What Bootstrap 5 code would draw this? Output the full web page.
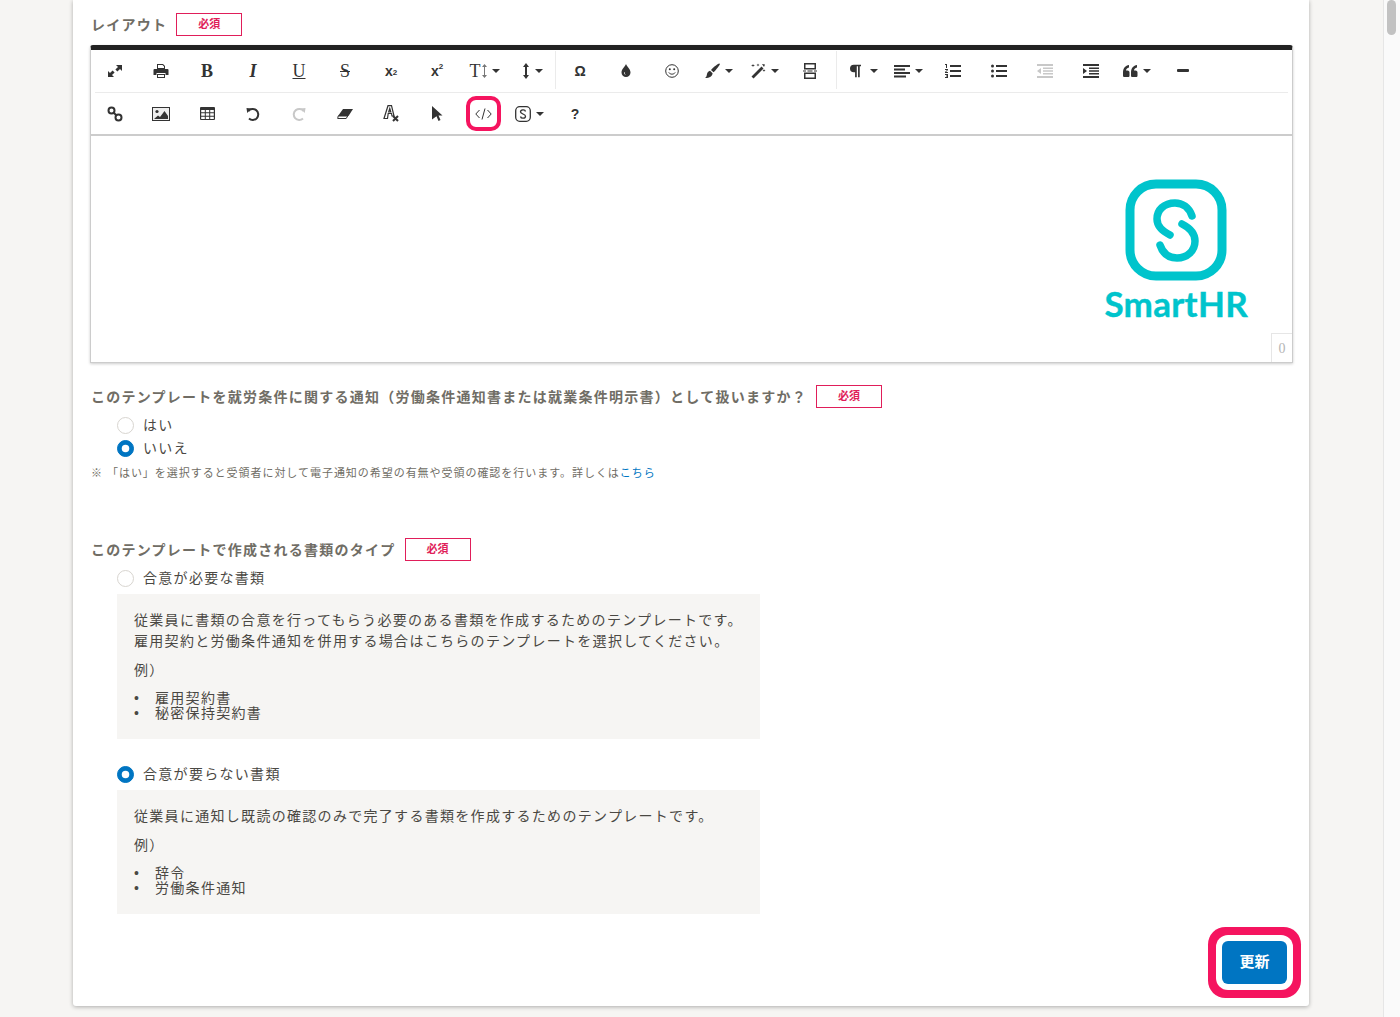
<!DOCTYPE html>
<html lang="ja">
  <head>
    <meta charset="UTF-8" />
    <meta name="viewport" content="width=device-width, initial-scale=1.0" />
    <title>テンプレート編集</title>
    <link
      rel="stylesheet"
      href="https://cdn.jsdelivr.net/npm/bootstrap@5.3.0/dist/css/bootstrap.min.css"
    />
    <style>
      html,
      body {
        height: 1017px;
        overflow: hidden;
      }
      body {
        background-color: #f6f5f3;
        color: #4a4843;
        font-family: "Liberation Sans", "Noto Sans CJK JP", sans-serif;
        font-size: 14px;
      }
      .page-main {
        width: 1383px;
        padding-left: 73px;
      }
      .fake-scroll {
        width: 17px;
        height: 1017px;
        background-color: #fafafa;
        border-left: 1px solid #e6e6e6;
        padding-left: 3px;
      }
      .fake-thumb {
        width: 9px;
        height: 35px;
        background-color: #c2c2c2;
        border-radius: 5px;
      }
      .sheet {
        width: 1236px;
        height: 1006px;
        background-color: #fff;
        padding: 13px 16px 22px 17px;
        box-shadow: 0 1px 4px rgba(0, 0, 0, 0.3);
        border-radius: 0 0 3px 3px;
      }
      .field-label {
        color: #706d65;
        font-weight: 700;
        font-size: 14px;
        letter-spacing: 1.25px;
        height: 23px;
        line-height: 25px;
        padding-left: 1px;
      }
      .req-tag {
        width: 66px;
        height: 23px;
        border: 1px solid #e01e5a;
        color: #e01e5a;
        font-size: 11px;
        font-weight: 700;
        line-height: 21px;
        text-align: center;
        margin-left: 9px;
        letter-spacing: 0;
      }
      .editor-box {
        margin-top: 9px;
        border: 1px solid #ccc;
        border-top: 5px solid #222;
        border-radius: 3px 3px 0 0;
        box-shadow: 0 1px 3px rgba(0, 0, 0, 0.2);
        position: relative;
      }
      .tool-row {
        height: 41px;
        padding-left: 1px;
      }
      .tool-row-top {
        height: 42px;
      }
      .tool-divider {
        height: 1px;
        margin: 0 4px;
        background-color: #ebebeb;
      }
      .tool-btn {
        width: 46px;
        height: 41px;
        padding: 0;
        border: 0;
        border-radius: 0;
        color: #333;
        flex: none;
        gap: 5px;
      }
      .tool-btn svg {
        fill: currentColor;
        display: block;
      }
      .tool-btn.is-off {
        color: #c8c8c8;
      }
      .tool-btn .dropdown-toggle::after {
        margin-left: 0;
        vertical-align: middle;
        border-top-width: 4px;
        border-left-width: 4.5px;
        border-right-width: 4.5px;
        display: block;
      }
      .tool-serif {
        font-family: "Liberation Serif", serif;
        font-size: 18px;
        line-height: 1;
      }
      .tool-sans {
        font-family: "Liberation Sans", sans-serif;
        font-weight: 700;
        font-size: 14px;
        line-height: 1;
      }
      .tool-sans sub,
      .tool-sans sup {
        font-size: 8px;
      }
      .tool-line {
        padding: 0 2px;
      }
      .tool-sep {
        width: 1px;
        height: 38px;
        background-color: #ebebeb;
        margin: 1px 1px 0 0;
      }
      .sep-b {
        margin-left: 3px;
        margin-right: 4px;
      }
      .w-t {
        width: 49px;
        gap: 1px;
      }
      .w-align {
        width: 43px;
      }
      .code-ring {
        width: 35px;
        height: 35px;
        border: 4px solid #f5145f;
        border-radius: 10px;
      }
      .editor-body {
        height: 228px;
        border-top: 2px solid #ccc;
        padding: 43px 44px 0 0;
      }
      .logo-text {
        font-family: Lato, sans-serif;
        font-weight: 700;
        font-size: 35px;
        line-height: 36px;
        letter-spacing: 0.3px;
        margin-top: 4px;
        color: #00c4cc;
        -webkit-text-stroke: 0.4px #00c4cc;
      }
      .char-count {
        position: absolute;
        right: 0;
        bottom: 0;
        width: 21px;
        height: 29px;
        border: 1px solid #e6e6e6;
        border-width: 1px 0 0 1px;
        color: #b5b5b5;
        font-family: "Liberation Serif", serif;
        font-size: 14px;
        line-height: 29px;
        text-align: center;
      }
      .q-one {
        margin-top: 22px;
      }
      .q-two {
        margin-top: 57px;
      }
      .opt-list {
        padding-left: 27px;
        margin-top: 6px;
      }
      .opt-row {
        height: 23px;
        min-height: 0;
        margin: 0;
        padding: 0;
        gap: 9px;
      }
      .opt-row .form-check-input {
        width: 17px;
        height: 17px;
        margin: 0;
        float: none;
        border-color: #d8d5d0;
      }
      .opt-row .form-check-input:checked {
        background-color: #0075c2;
        border-color: #0075c2;
      }
      .opt-row .form-check-label {
        letter-spacing: 1.3px;
        line-height: 23px;
      }
      .note-text {
        color: #706d65;
        font-size: 11px;
        letter-spacing: 0.96px;
        line-height: 16px;
        margin-top: 5px;
        padding-left: 1px;
      }
      .note-text a {
        color: #0075c2;
        text-decoration: none;
      }
      .desc-box {
        width: 643px;
        background-color: #f6f5f3;
        padding: 16px 17px 18px;
        margin-top: 4px;
        letter-spacing: 1.3px;
        line-height: 21px;
      }
      .desc-box p {
        margin: 0 0 8px;
      }
      .desc-box ul {
        list-style: none;
        margin: 10px 0 0;
        padding-left: 21px;
        line-height: 15px;
      }
      .desc-box li::before {
        content: "•";
        display: inline-block;
        width: 21px;
        margin-left: -21px;
      }
      .opt-after {
        margin-top: 24px;
      }
      .save-row {
        margin-top: 27px;
        padding-right: 6px;
      }
      .save-btn {
        width: 65px;
        height: 43px;
        padding: 0;
        background-color: #0075c2;
        border: 0;
        border-radius: 6px;
        color: #fff;
        font-weight: 700;
        font-size: 15px;
        box-shadow: 0 0 0 6px #fff, 0 0 0 14px #f5145f;
      }
    </style>
  </head>
  <body>
    <div class="d-flex">
      <div class="page-main">
        <div class="sheet">
          <div class="d-flex field-label">
            <span>レイアウト</span><span class="req-tag">必須</span>
          </div>

          <div class="editor-box">
            <!-- toolbar row 1 -->
            <div class="d-flex tool-row tool-row-top">
              <button class="btn tool-btn d-flex align-items-center justify-content-center"><svg width="16" height="16" viewBox="0 0 16 16"><path d="M9 2h6v6l-2-2-2.600 2.600-2-2L11 4zM1 14V8l2 2 2.600-2.600 2 2L5 12l2 2z"/></svg></button>
              <button class="btn tool-btn d-flex align-items-center justify-content-center"><svg width="16" height="16" viewBox="0 0 16 16"><path d="M4 1h6l2 2v3H4zM5 2v3h6V3.500L9.500 2zM1.500 6h13a1 1 0 0 1 1 1v5h-3v-2h-9v2H.5V7a1 1 0 0 1 1-1zM4 11h8v4H4zm1 1v2h6v-2z" fill-rule="evenodd"/></svg></button>
              <button class="btn tool-btn d-flex align-items-center justify-content-center tool-serif fw-bold">B</button>
              <button class="btn tool-btn d-flex align-items-center justify-content-center tool-serif fw-bold fst-italic">I</button>
              <button class="btn tool-btn d-flex align-items-center justify-content-center tool-serif"><span class="tool-line text-decoration-underline">U</span></button>
              <button class="btn tool-btn d-flex align-items-center justify-content-center tool-serif"><span class="tool-line text-decoration-line-through">S</span></button>
              <button class="btn tool-btn gap-0 d-flex align-items-center justify-content-center tool-sans">x<sub>2</sub></button>
              <button class="btn tool-btn gap-0 d-flex align-items-center justify-content-center tool-sans">x<sup>2</sup></button>
              <button class="btn tool-btn w-t d-flex align-items-center justify-content-center"><span class="tool-serif">T</span><svg width="5" height="14" viewBox="0 0 5 14"><path d="M2.500 0 5 3H3v8h2l-2.500 3L0 11h2V3H0z" fill="#777"/></svg><span class="dropdown-toggle ms-1"></span></button>
              <button class="btn tool-btn d-flex align-items-center justify-content-center"><svg width="8" height="16" viewBox="0 0 8 16"><path d="M4 0l3 4H5v8h2l-3 4-3-4h2V4H1z"/></svg><span class="dropdown-toggle"></span></button>
              <div class="tool-sep"></div>
              <button class="btn tool-btn d-flex align-items-center justify-content-center tool-sans">Ω</button>
              <button class="btn tool-btn d-flex align-items-center justify-content-center"><svg width="12" height="14" viewBox="0 0 12 14"><path d="M6 0c1 3 4.500 5 4.500 8.500a4.500 4.500 0 0 1-9 0C1.500 5 5 3 6 0zM4 8.500c0 1.500 1 2.500 2 2.500-1-.7-1.300-1.500-1.300-3z" fill-rule="evenodd"/></svg></button>
              <button class="btn tool-btn d-flex align-items-center justify-content-center"><svg width="14" height="14" viewBox="0 0 14 14"><circle cx="7" cy="7" r="6.300" fill="none" stroke="currentColor"/><circle cx="4.800" cy="5.200" r="1"/><circle cx="9.200" cy="5.200" r="1"/><path d="M3.800 8.500c1.500 2.200 4.900 2.200 6.400 0" fill="none" stroke="currentColor"/></svg></button>
              <button class="btn tool-btn d-flex align-items-center justify-content-center"><svg width="16" height="16" viewBox="0 0 16 16"><path d="M15 .5c.6 0 1 .5.8 1C14.500 4 11 8 9.500 9.300L7 7C8.500 5.200 13 1.200 15 .5zM6 7.800l2.600 2.400C8.300 13 6 15 1 15c1.500-1 1.600-2 1.900-3.500C3.200 9.500 4.500 8.200 6 7.800z"/></svg><span class="dropdown-toggle"></span></button>
              <button class="btn tool-btn d-flex align-items-center justify-content-center"><svg width="16" height="16" viewBox="0 0 16 16"><path d="M11.500 3.500l2 2L3.500 15.500l-2-2zM3 1l.5 1L5 2.500l-1.500.5L3 4l-.5-1L1 2.500l1.500-.5zM8 .5l.4 1 1.100.5-1.100.4L8 3.500l-.4-1.100L6.500 2l1.100-.5zM14 6l.4 1 1.100.5-1.100.4L14 9l-.4-1.100-1.100-.4 1.100-.5zM12 1l3 .5-1 2.500z"/></svg><span class="dropdown-toggle"></span></button>
              <button class="btn tool-btn d-flex align-items-center justify-content-center"><svg width="14" height="16" viewBox="0 0 14 16"><path d="M1 0h12v6.500H1zM2.500 1.500v3.500h9V1.500zM1 9.500h12V16H1zm1.500 1.500v3.500h9V11zM0 7.500h3v1H0zm4.500 0h5v1h-5zm6.500 0h3v1h-3z" fill-rule="evenodd"/></svg></button>
              <div class="tool-sep sep-b"></div>
              <button class="btn tool-btn d-flex align-items-center justify-content-center"><svg width="11" height="14" viewBox="0 0 13 15"><path d="M4.500 0H13v2h-1.500v13h-2V2H8v13H6V9h-1.500a4.500 4.500 0 0 1 0-9z"/></svg><span class="dropdown-toggle ms-1"></span></button>
              <button class="btn tool-btn w-align d-flex align-items-center justify-content-center"><svg width="16" height="14" viewBox="0 0 16 14"><path d="M0 1h16v2H0zM0 4.500h11v2H0zM0 8h16v2H0zM0 11.500h12v2H0z"/></svg><span class="dropdown-toggle"></span></button>
              <button class="btn tool-btn d-flex align-items-center justify-content-center"><svg width="16" height="14" viewBox="0 0 16 14"><path d="M5 1h11v2H5zM5 6h11v2H5zM5 11h11v2H5zM0 0h2v4H1V1H0zM0 5h3v1L1 8h2v1H0V8l2-2H0zM0 10h3v4H0v-1h2v-.5H1v-1h1V11H0z"/></svg></button>
              <button class="btn tool-btn d-flex align-items-center justify-content-center"><svg width="16" height="14" viewBox="0 0 16 14"><circle cx="1.500" cy="2" r="1.500"/><circle cx="1.500" cy="7" r="1.500"/><circle cx="1.500" cy="12" r="1.500"/><path d="M5 1h11v2H5zM5 6h11v2H5zM5 11h11v2H5z"/></svg></button>
              <button class="btn tool-btn is-off d-flex align-items-center justify-content-center"><svg width="16" height="14" viewBox="0 0 16 14"><path d="M0 0h16v2H0zM6 3.500h10v1.500H6zM6 6.300h10v1.500H6zM6 9h10v1.500H6zM0 12h16v2H0zM4 4v6L0 7z"/></svg></button>
              <button class="btn tool-btn d-flex align-items-center justify-content-center"><svg width="16" height="14" viewBox="0 0 16 14"><path d="M0 0h16v2H0zM6 3.500h10v1.500H6zM6 6.300h10v1.500H6zM6 9h10v1.500H6zM0 12h16v2H0zM0 4v6l4-3z"/></svg></button>
              <button class="btn tool-btn d-flex align-items-center justify-content-center"><svg width="15" height="12" viewBox="0 0 15 12"><path d="M0 7.500C0 3 2.500.5 6 0v2.500C4 3 3 4 3 5.500h1.500C6 5.500 6.500 6.500 6.500 7.500V10.500C6.500 11.500 6 12 5 12H1.500C.5 12 0 11.500 0 10.500zM8 7.500C8 3 10.500.5 14 0v2.500C12 3 11 4 11 5.500h1.500c1.500 0 2 1 2 2v3c0 1-.5 1.500-1.500 1.500H9.500C8.500 12 8 11.500 8 10.500z"/></svg><span class="dropdown-toggle"></span></button>
              <button class="btn tool-btn d-flex align-items-center justify-content-center"><svg width="12" height="4" viewBox="0 0 12 4"><rect width="12" height="3" rx="1"/></svg></button>
            </div>
            <div class="tool-divider"></div>

            <!-- toolbar row 2 -->
            <div class="d-flex tool-row">
              <button class="btn tool-btn d-flex align-items-center justify-content-center"><svg width="16" height="16" viewBox="0 0 16 16"><g fill="none" stroke="currentColor" stroke-width="2"><circle cx="4.500" cy="4.500" r="3"/><circle cx="11.500" cy="11.500" r="3"/><path d="M6.500 6.500l3 3"/></g></svg></button>
              <button class="btn tool-btn d-flex align-items-center justify-content-center"><svg width="18" height="14" viewBox="0 0 18 14"><rect x=".5" y=".5" width="17" height="13" fill="#eee" stroke="currentColor"/><circle cx="5" cy="4.500" r="1.600"/><path d="M2 12l4-3.500 2 1.500 4.500-6 3.500 5v3z"/></svg></button>
              <button class="btn tool-btn d-flex align-items-center justify-content-center"><svg width="15" height="13" viewBox="0 0 15 13"><path d="M1 0h13a1 1 0 0 1 1 1v11a1 1 0 0 1-1 1H1a1 1 0 0 1-1-1V1a1 1 0 0 1 1-1zm.200 3v2.300h3.600V3zm4.600 0v2.300h3.400V3zm4.400 0v2.300h3.600V3zm-9 3.300v2.400h3.600V6.300zm4.600 0v2.400h3.400V6.300zm4.400 0v2.400h3.600V6.300zm-9 3.400v2.200h3.600V9.700zm4.600 0v2.200h3.400V9.700zm4.400 0v2.200h3.600V9.700z" fill-rule="evenodd"/></svg></button>
              <button class="btn tool-btn d-flex align-items-center justify-content-center"><svg width="14" height="14" viewBox="0 0 14 14"><path d="M2.300 4.200A5.500 5.500 0 1 1 3 11.500" fill="none" stroke="currentColor" stroke-width="2"/><path d="M.5 1 5.500 1.500 1.200 6z"/></svg></button>
              <button class="btn tool-btn is-off d-flex align-items-center justify-content-center"><svg width="14" height="14" viewBox="0 0 14 14"><path d="M11.700 4.200A5.500 5.500 0 1 0 11 11.500" fill="none" stroke="currentColor" stroke-width="2"/><path d="M13.500 1 8.500 1.500l4.300 4.500z"/></svg></button>
              <button class="btn tool-btn d-flex align-items-center justify-content-center"><svg width="16" height="10" viewBox="0 0 16 10"><path d="M6 0h10l-4.500 7H1z"/><path d="M1.200 7h9.500L9.200 9.500H.7z" fill="#fff" stroke="currentColor"/></svg></button>
              <button class="btn tool-btn d-flex align-items-center justify-content-center"><svg width="17" height="17" viewBox="0 0 17 17"><path d="M5 .7h3.500L11 11H9l-.5-2.500H5.200L4.500 13.500H1zM6.800 3.500 5.700 7h2.100z" fill="#fff" stroke="currentColor" stroke-width="1.200" fill-rule="evenodd"/><path d="M10 11l5 5M15 11l-5 5" fill="none" stroke="currentColor" stroke-width="2"/></svg></button>
              <button class="btn tool-btn d-flex align-items-center justify-content-center"><svg width="12" height="15" viewBox="0 0 12 15"><path d="M1 0l10.500 9.500H7.500l2 4.500-2 1-2-4.700L1 13.500z"/></svg></button>
              <button class="btn tool-btn d-flex align-items-center justify-content-center">
                <span class="code-ring d-flex align-items-center justify-content-center"><svg width="17" height="12" viewBox="0 0 17 12"><path d="M4.500 2 .8 6l3.700 4M12.500 2l3.700 4-3.700 4M10 .5 7 11.500" fill="none" stroke="currentColor"/></svg></span>
              </button>
              <button class="btn tool-btn d-flex align-items-center justify-content-center"><svg width="16" height="16" viewBox="0 0 16 16"><rect x=".7" y=".7" width="14.600" height="14.600" rx="4" fill="none" stroke="currentColor" stroke-width="1.300"/><path d="M10.500 5.500C10 3 5.500 3.500 5.500 6c0 2 5 2 5 4.200 0 2.500-4.500 2.700-5 .3" fill="none" stroke="currentColor" stroke-width="1.300"/></svg><span class="dropdown-toggle"></span></button>
              <button class="btn tool-btn d-flex align-items-center justify-content-center tool-sans">?</button>
            </div>

            <div class="editor-body d-flex justify-content-end">
              <div class="d-flex flex-column align-items-center">
                <svg width="102" height="102" viewBox="0 0 102 102">
                  <rect x="5" y="5" width="92" height="92" rx="26" fill="none" stroke="#00c4cc" stroke-width="9"/>
                  <g fill="none" stroke="#00c4cc" stroke-width="7.500" stroke-linecap="round">
                    <path d="M67 37C64 28 57 24 50 24 39 24 32 31 32 40 32 48 38 52 45 56"/>
                    <path d="M57 45C65 49 70 54 70 62 70 72 62 79 52 79 44 79 38 75 35 66"/>
                  </g>
                </svg>
                <div class="logo-text">SmartHR</div>
              </div>
            </div>
            <div class="char-count">0</div>
          </div>

          <div class="d-flex field-label q-one">
            <span>このテンプレートを就労条件に関する通知（労働条件通知書または就業条件明示書）として扱いますか？</span><span class="req-tag">必須</span>
          </div>
          <div class="opt-list">
            <div class="form-check d-flex align-items-center opt-row">
              <input class="form-check-input" type="radio" name="notice" id="noticeYes" />
              <label class="form-check-label" for="noticeYes">はい</label>
            </div>
            <div class="form-check d-flex align-items-center opt-row">
              <input class="form-check-input" type="radio" name="notice" id="noticeNo" checked />
              <label class="form-check-label" for="noticeNo">いいえ</label>
            </div>
          </div>
          <div class="note-text">※ 「はい」を選択すると受領者に対して電子通知の希望の有無や受領の確認を行います。詳しくは<a href="#">こちら</a></div>

          <div class="d-flex field-label q-two">
            <span>このテンプレートで作成される書類のタイプ</span><span class="req-tag">必須</span>
          </div>
          <div class="opt-list">
            <div class="form-check d-flex align-items-center opt-row">
              <input class="form-check-input" type="radio" name="doctype" id="docAgree" />
              <label class="form-check-label" for="docAgree">合意が必要な書類</label>
            </div>
            <div class="desc-box">
              <p>従業員に書類の合意を行ってもらう必要のある書類を作成するためのテンプレートです。<br />雇用契約と労働条件通知を併用する場合はこちらのテンプレートを選択してください。</p>
              <p>例）</p>
              <ul>
                <li>雇用契約書</li>
                <li>秘密保持契約書</li>
              </ul>
            </div>
            <div class="form-check d-flex align-items-center opt-row opt-after">
              <input class="form-check-input" type="radio" name="doctype" id="docNotice" checked />
              <label class="form-check-label" for="docNotice">合意が要らない書類</label>
            </div>
            <div class="desc-box">
              <p>従業員に通知し既読の確認のみで完了する書類を作成するためのテンプレートです。</p>
              <p>例）</p>
              <ul>
                <li>辞令</li>
                <li>労働条件通知</li>
              </ul>
            </div>
          </div>

          <div class="d-flex justify-content-end save-row">
            <button class="btn save-btn">更新</button>
          </div>
        </div>
      </div>
      <div class="fake-scroll"><div class="fake-thumb"></div></div>
    </div>

    <script src="https://cdn.jsdelivr.net/npm/bootstrap@5.3.0/dist/js/bootstrap.bundle.min.js"></script>
  </body>
</html>
